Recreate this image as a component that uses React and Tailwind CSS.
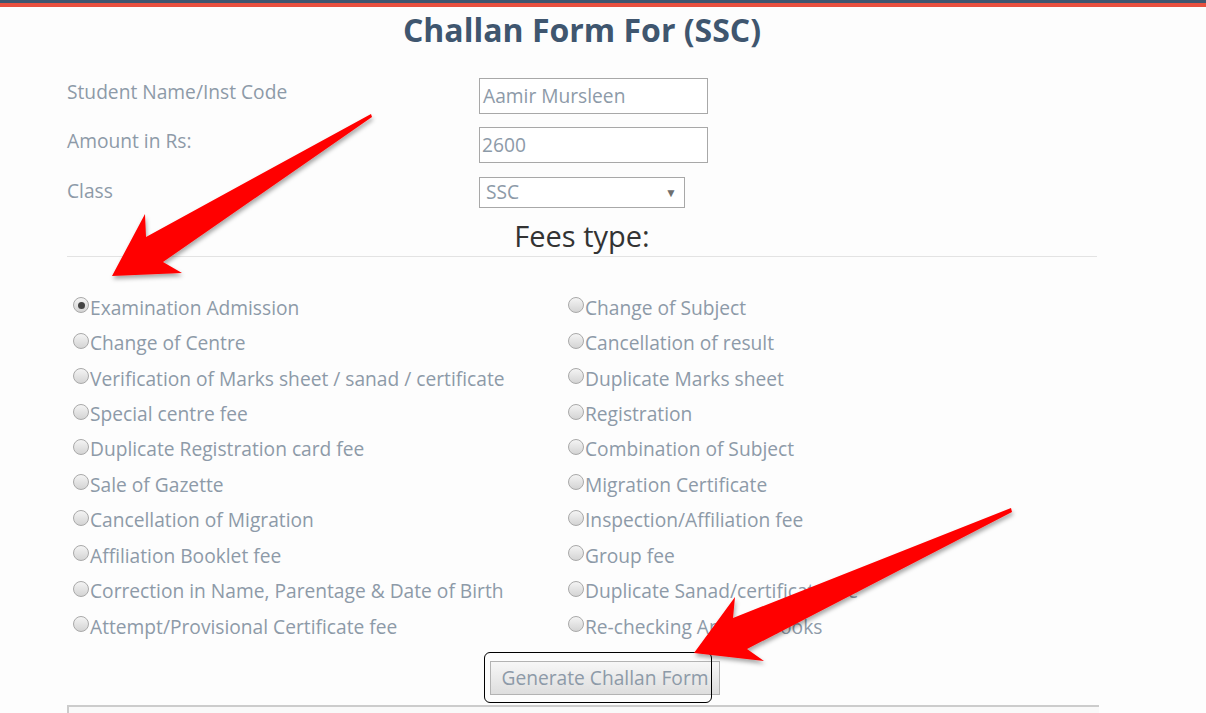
import React from 'react';

const leftFees = [
    'Examination Admission',
    'Change of Centre',
    'Verification of Marks sheet / sanad / certificate',
    'Special centre fee',
    'Duplicate Registration card fee',
    'Sale of Gazette',
    'Cancellation of Migration',
    'Affiliation Booklet fee',
    'Correction in Name, Parentage & Date of Birth',
    'Attempt/Provisional Certificate fee',
];

const rightFees = [
    'Change of Subject',
    'Cancellation of result',
    'Duplicate Marks sheet',
    'Registration',
    'Combination of Subject',
    'Migration Certificate',
    'Inspection/Affiliation fee',
    'Group fee',
    'Duplicate Sanad/certificate fee',
    'Re-checking Answer books',
];

const Radio = ({ checked, label }) => (
    <div className="flex items-center h-[35.44px]">
        <span className="w-[16px] h-[16px] rounded-full border border-[#a9a9a9] bg-gradient-to-b from-[#f4f4f4] to-[#d4d4d4] flex items-center justify-center shrink-0 mt-[-5px] mr-[1px]">
            {checked && <span className="w-[7px] h-[7px] rounded-full bg-[#444]" />}
        </span>
        <span className="text-[19.2px] leading-6 text-[#8d9aa8]">{label}</span>
    </div>
);

const Arrows = () => (
    <svg className="absolute top-0 left-0 pointer-events-none" width="1206" height="713" viewBox="0 0 1206 713">
        <defs>
            <filter id="shadow" x="-20%" y="-20%" width="140%" height="140%">
                <feDropShadow dx="1" dy="3" stdDeviation="2" floodColor="#000" floodOpacity="0.35" />
            </filter>
        </defs>
        <polygon
            points="371,114 146,237 145,214 112,276 182,273 163,262 372,117"
            fill="#ff0000"
            filter="url(#shadow)"
        />
        <polygon
            points="1011,508 733,618 735,597 694,653 764,661 747,649 1012,512"
            fill="#ff0000"
            filter="url(#shadow)"
        />
    </svg>
);

const App = () => {
    const labelClass = "w-[412px] text-[19.2px] leading-6 text-[#8d9aa8] mt-[2px]";

    return (
        <div className="relative h-[713px] overflow-hidden bg-[#fdfdfd] font-['Open_Sans',sans-serif]">
            <div className="h-[3px] bg-[#3f566f]" />
            <div className="h-[4px] bg-[#e8503f]" />

            <div className="ml-[67px] w-[1030px]">
                <h1 className="mt-[3px] text-center text-[32px] leading-10 font-bold text-[#3f566f]">Challan Form For (SSC)</h1>

                <div className="mt-[28px] flex flex-col gap-[13px]">
                    <div className="flex items-start h-[36px]">
                        <label className={labelClass}>Student Name/Inst Code</label>
                        <div className="w-[229px] h-[36px] border border-[#a8a8a8] bg-white flex items-center px-[3px] pt-[1px] text-[19.2px] text-[#8d9aa8]">Aamir Mursleen</div>
                    </div>
                    <div className="flex items-start h-[36px]">
                        <label className={labelClass}>Amount in Rs:</label>
                        <div className="w-[229px] h-[36px] border border-[#a8a8a8] bg-white flex items-center px-[2px] pt-[1px] text-[19.2px] text-[#8d9aa8]">2600</div>
                    </div>
                    <div className="flex items-start h-[31px] mt-[1px]">
                        <label className={labelClass}>Class</label>
                        <div className="w-[206px] h-[31px] border border-[#a8a8a8] bg-white flex items-center justify-between pl-[6px] pr-[7px] text-[19.2px] text-[#8d9aa8]">
                            <span>SSC</span>
                            <span className="text-[12px] text-[#6f6f6f]">▼</span>
                        </div>
                    </div>
                </div>

                <div className="mt-[12px] text-center text-[29px] leading-8 text-[#333]">Fees type:</div>
                <div className="mt-[4px] h-px bg-[#e3e3e3]" />

                <div className="mt-[33px] grid grid-cols-[495px_1fr] pl-[6px]">
                    <div className="flex flex-col">
                        {leftFees.map((f, i) => <Radio key={f} label={f} checked={i === 0} />)}
                    </div>
                    <div className="flex flex-col">
                        {rightFees.map(f => <Radio key={f} label={f} />)}
                    </div>
                </div>

                <div className="mt-[17px] flex">
                    <div className="relative ml-[423px]">
                        <button className="h-[34px] w-[230px] border border-[#b3b3b3] bg-gradient-to-b from-[#f7f7f7] to-[#dedede] text-[19.2px] text-[#8d9aa8] pt-[1px]">
                            Generate Challan Form
                        </button>
                        <div className="absolute left-[-6px] top-[-9px] w-[228px] h-[51px] rounded-[6px] border border-black" />
                    </div>
                </div>

                <div className="mt-[10px] h-[40px] border-t-2 border-l-2 border-[#cccccc] bg-[#f9f9f9] w-[1032px]" />
            </div>

            <Arrows />
        </div>
    );
};

export default App;
